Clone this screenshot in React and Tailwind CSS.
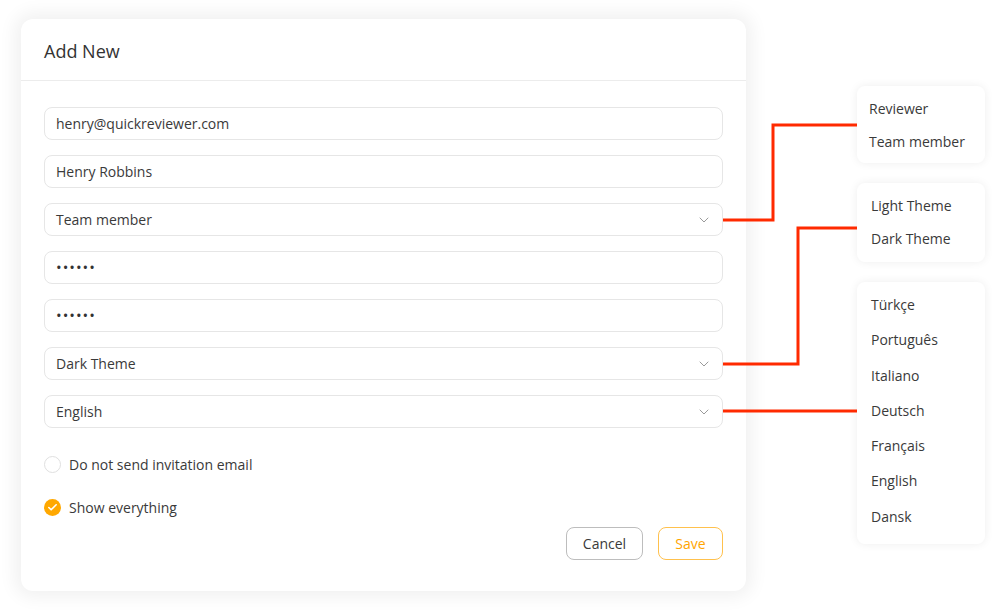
import { ChevronDown, Check } from 'lucide-react';

function Field({ value, select, password }) {
  return (
    <div className="h-[33px] rounded-lg border border-[#e6e6e6] bg-white flex items-center justify-between pl-[11px] pr-[10px]">
      <span className={password ? 'text-[#333] text-[15px] tracking-[1px] leading-none' : 'text-[#3a3a3a] text-[14px]'}>{value}</span>
      {select && <ChevronDown className="w-4 h-4 text-[#9a9a9a]" strokeWidth={1.5} />}
    </div>
  );
}

function Menu({ items, gap, className }) {
  return (
    <div className={`w-[128px] rounded-lg bg-white shadow-[0_0_10px_rgba(0,0,0,0.07)] ${className}`}>
      <div className={`flex flex-col ${gap}`}>
        {items.map((it) => (
          <div key={it} className="text-[14px] text-[#3a3a3a] leading-[20px]">{it}</div>
        ))}
      </div>
    </div>
  );
}

export default function App() {
  return (
    <div className="relative w-[1000px] h-[611px] bg-white overflow-hidden" style={{ fontFamily: '"Open Sans", "Liberation Sans", sans-serif' }}>
      <div className="flex pt-[19px] pl-[21px]">
        <div className="w-[725px] h-[572px] rounded-xl bg-white shadow-[0_0_18px_6px_rgba(0,0,0,0.06)] flex flex-col">
          <div className="h-[62px] border-b border-[#ececec] flex items-center pl-[23px] pt-[4px]">
            <h1 className="text-[18px] text-[#333]">Add New</h1>
          </div>
          <div className="flex flex-col gap-[15px] px-[23px] pt-[26px]">
            <Field value="henry@quickreviewer.com" />
            <Field value="Henry Robbins" />
            <Field value="Team member" select />
            <Field value="••••••" password />
            <Field value="••••••" password />
            <Field value="Dark Theme" select />
            <Field value="English" select />
          </div>
          <div className="flex flex-col gap-[22px] px-[23px] pt-[26px]">
            <label className="flex items-center gap-[8px]">
              <span className="w-[17px] h-[17px] rounded-full border border-[#e0e0e0] bg-white" />
              <span className="text-[14px] text-[#3a3a3a]">Do not send invitation email</span>
            </label>
            <label className="flex items-center gap-[8px]">
              <span className="w-[17px] h-[17px] rounded-full bg-[#ffa800] flex items-center justify-center">
                <Check className="w-[11px] h-[11px] text-white" strokeWidth={3.5} />
              </span>
              <span className="text-[14px] text-[#3a3a3a]">Show everything</span>
            </label>
          </div>
          <div className="flex justify-end gap-[15px] px-[23px] mt-[9px]">
            <button className="w-[77px] h-[33px] rounded-lg border border-[#bdbdbd] text-[14px] text-[#3a3a3a]">Cancel</button>
            <button className="w-[65px] h-[33px] rounded-lg border border-[#ffc14d] text-[14px] text-[#ffa500]">Save</button>
          </div>
        </div>

        <div className="flex flex-col ml-[111px] pt-[67px]">
          <Menu items={['Reviewer', 'Team member']} gap="gap-[13px]" className="h-[77px] pt-[13px] pl-[12px]" />
          <Menu items={['Light Theme', 'Dark Theme']} gap="gap-[13px]" className="h-[79px] pt-[13px] mt-[20px] pl-[14px]" />
          <Menu items={['Türkçe', 'Português', 'Italiano', 'Deutsch', 'Français', 'English', 'Dansk']} gap="gap-[15.3px]" className="h-[262px] pt-[13px] mt-[20px] pl-[14px]" />
        </div>
      </div>

      <svg className="absolute left-0 top-0 pointer-events-none" width="1000" height="611">
        <polyline points="723,220 773,220 773,125 857,125" fill="none" stroke="#ff2a00" strokeWidth="3" />
        <polyline points="723,364 798,364 798,228 857,228" fill="none" stroke="#ff2a00" strokeWidth="3" />
        <polyline points="723,411 857,411" fill="none" stroke="#ff2a00" strokeWidth="3" />
      </svg>
    </div>
  );
}
